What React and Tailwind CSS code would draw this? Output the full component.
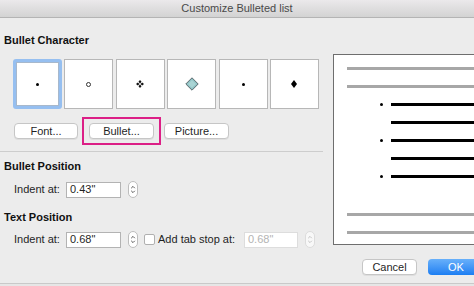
import React from "react";

const font = "font-['Liberation_Sans',Arial,sans-serif]";

function Stepper({ disabled }) {
  return (
    <div
      className={
        disabled
          ? "flex h-[17px] w-[10px] flex-none items-center justify-center rounded-full border border-[#dcdcdc] bg-[#f8f8f8]"
          : "flex h-[17px] w-[10px] flex-none items-center justify-center rounded-full border border-[#bdbdbd] bg-white"
      }
    >
      <svg width="6" height="11" viewBox="0 0 6 11">
        <path
          d="M1.2 4.2 L3 2.4 L4.8 4.2 M1.2 6.8 L3 8.6 L4.8 6.8"
          fill="none"
          stroke={disabled ? "#c4c4c4" : "#5a5a5a"}
          strokeWidth="1"
        />
      </svg>
    </div>
  );
}

function Dot() {
  return <div className="h-[3px] w-[3px] rounded-full bg-black" />;
}

function Circle() {
  return <div className="h-[5px] w-[5px] rounded-full border border-[#333]" />;
}

function FourDiamond() {
  return (
    <svg width="8" height="8" viewBox="0 0 8 8">
      <path d="M4 0 L5.5 1.8 L4 3.5 L2.5 1.8 Z" fill="#111" />
      <path d="M4 4.5 L5.5 6.2 L4 8 L2.5 6.2 Z" fill="#111" />
      <path d="M0 4 L1.8 2.5 L3.5 4 L1.8 5.5 Z" fill="#111" />
      <path d="M4.5 4 L6.2 2.5 L8 4 L6.2 5.5 Z" fill="#111" />
    </svg>
  );
}

function TealDiamond() {
  return (
    <svg width="14" height="14" viewBox="0 0 14 14">
      <path d="M7 0.8 L13.2 7 L7 13.2 L0.8 7 Z" fill="#8fc2c4" stroke="#5c6b6e" strokeWidth="1" />
      <path d="M7 3 L11 7 L7 11 L3 7 Z" fill="#a9d4d4" />
    </svg>
  );
}

function BlackDiamond() {
  return (
    <svg width="6" height="8" viewBox="0 0 6 8">
      <path d="M3 0 L6 4 L3 8 L0 4 Z" fill="#000" />
    </svg>
  );
}

const glyphs = [Dot, Circle, FourDiamond, TealDiamond, Dot, BlackDiamond];

function Button({ children, className = "" }) {
  return (
    <div
      className={`flex h-[16px] items-center justify-center rounded-[4px] border border-[#c6c6c6] bg-white text-[11px] leading-none text-[#1f1f1f] shadow-[0_1px_0_rgba(0,0,0,0.06)] ${className}`}
    >
      {children}
    </div>
  );
}

function Input({ value, disabled }) {
  return (
    <div
      className={
        disabled
          ? "flex h-[16px] w-[54px] flex-none items-center border border-[#dddddd] bg-white pl-[3px] text-[11px] text-[#b4b4b4]"
          : "flex h-[16px] w-[55px] flex-none items-center border border-[#b3b3b3] bg-white pl-[3px] text-[11px] text-[#1f1f1f]"
      }
    >
      {value}
    </div>
  );
}

export default function App() {
  return (
    <div className={`flex h-[286px] w-[474px] flex-col overflow-hidden bg-[#ececec] ${font}`}>
      {/* title bar */}
      <div className="flex h-[18px] flex-none items-center justify-center border-b border-[#b4b4b4] bg-gradient-to-b from-[#ebe9eb] to-[#d3d3d3] text-[11px] text-[#4a4a4a]">
        Customize Bulleted list
      </div>

      <div className="flex h-[265px] flex-none">
        {/* left column */}
        <div className="flex w-[333px] flex-none flex-col">
          <div className="mt-[16px] pl-[4px] text-[11px] font-bold leading-[13px] text-[#111]">
            Bullet Character
          </div>

          <div className="mt-[12px] flex gap-[2.4px] pl-[13px]">
            {glyphs.map((G, i) => (
              <div
                key={i}
                className={
                  i === 0
                    ? "flex h-[50px] w-[49px] items-center justify-center rounded-[3px] border-[3px] border-[#96bff0] bg-white shadow-[inset_0_0_0_1px_#a7b8cc]"
                    : "flex h-[50px] w-[49px] items-center justify-center border border-[#b7b7b7] bg-white"
                }
              >
                <G />
              </div>
            ))}
          </div>

          <div className="mt-[14px] flex items-center pl-[14px]">
            <Button className="w-[64px]">Font...</Button>
            {/* highlight box around the Bullet button */}
            <div className="-my-[6px] ml-[4px] border-2 border-[#dc1f86] px-[5px] py-[4px]">
              <Button className="w-[65px]">Bullet...</Button>
            </div>
            <Button className="ml-[3px] w-[65px]">Picture...</Button>
          </div>

          <div className="mt-[12px] h-px w-[323px] bg-[#cdcdcd]" />

          <div className="mt-[8px] pl-[4px] text-[11px] font-bold leading-[13px] text-[#111]">
            Bullet Position
          </div>
          <div className="mt-[8px] flex items-center pl-[14px] text-[11px] text-[#1f1f1f]">
            <span className="w-[52px] flex-none">Indent at:</span>
            <Input value={'0.43"'} />
            <div className="ml-[7px]">
              <Stepper />
            </div>
          </div>

          <div className="mt-[13px] pl-[4px] text-[11px] font-bold leading-[13px] text-[#111]">
            Text Position
          </div>
          <div className="mt-[7px] flex items-center pl-[14px] text-[11px] text-[#1f1f1f]">
            <span className="w-[52px] flex-none">Indent at:</span>
            <Input value={'0.68"'} />
            <div className="ml-[7px]">
              <Stepper />
            </div>
            <div className="ml-[6px] h-[11px] w-[11px] flex-none rounded-[2px] border border-[#b0b0b0] bg-white" />
            <span className="ml-[3px] w-[86px] flex-none">Add tab stop at:</span>
            <Input value={'0.68"'} disabled />
            <div className="ml-[7px]">
              <Stepper disabled />
            </div>
          </div>
        </div>

        {/* right column */}
        <div className="flex flex-none flex-col">
          <div className="mt-[36px] h-[191px] w-[160px] border border-[#6e6e6e] bg-white pt-[12px]">
            <div className="flex flex-col gap-[15px]">
              <div className="ml-[13px] h-[3px] bg-[#a7a7a7]" />
              <div className="ml-[13px] h-[3px] bg-[#a7a7a7]" />
              {[true, false, true, false, true].map((b, i) => (
                <div key={i} className="flex h-[3px] items-center">
                  <div className="ml-[46px] w-[11px] flex-none">
                    {b && <div className="h-[3px] w-[3px] rounded-full bg-black" />}
                  </div>
                  <div className="h-[3px] flex-1 bg-black" />
                </div>
              ))}
            </div>
            <div className="mt-[35px] flex flex-col gap-[15px]">
              <div className="ml-[13px] h-[3px] bg-[#a7a7a7]" />
              <div className="ml-[13px] h-[3px] bg-[#a7a7a7]" />
            </div>
          </div>

          <div className="mt-[14px] flex">
            <Button className="ml-[29px] w-[55px]">Cancel</Button>
            <div className="ml-[11px] flex h-[16px] w-[56px] items-center justify-center rounded-[4px] bg-gradient-to-b from-[#67b0fa] to-[#1a7ef2] text-[11px] text-white">
              OK
            </div>
          </div>
        </div>
      </div>

      <div className="h-px flex-none bg-[#c9c9c9]" />
      <div className="flex-1 bg-[#e6e6e6]" />
    </div>
  );
}
